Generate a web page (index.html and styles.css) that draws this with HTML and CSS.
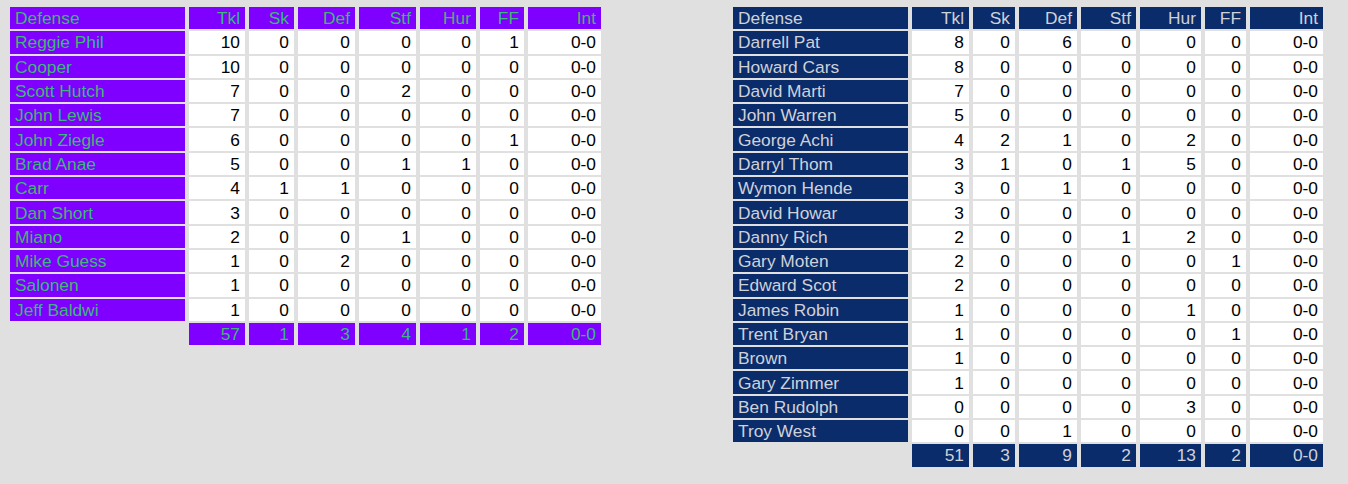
FILE: index.html
```html
<!DOCTYPE html>
<html>
<head>
<meta charset="utf-8">
<title>Defense</title>
<link rel="stylesheet" href="styles.css">
</head>
<body>
<div class="page">
  <table class="stats home">
    <thead>
      <tr><th class="name c1">Defense</th><th class="c2">Tkl</th><th class="c3">Sk</th><th class="c4">Def</th><th class="c5">Stf</th><th class="c6">Hur</th><th class="c7">FF</th><th class="c8">Int</th></tr>
    </thead>
    <tbody>
      <tr><th class="name">Reggie Phil</th><td>10</td><td>0</td><td>0</td><td>0</td><td>0</td><td>1</td><td>0-0</td></tr>
      <tr><th class="name">Cooper</th><td>10</td><td>0</td><td>0</td><td>0</td><td>0</td><td>0</td><td>0-0</td></tr>
      <tr><th class="name">Scott Hutch</th><td>7</td><td>0</td><td>0</td><td>2</td><td>0</td><td>0</td><td>0-0</td></tr>
      <tr><th class="name">John Lewis</th><td>7</td><td>0</td><td>0</td><td>0</td><td>0</td><td>0</td><td>0-0</td></tr>
      <tr><th class="name">John Ziegle</th><td>6</td><td>0</td><td>0</td><td>0</td><td>0</td><td>1</td><td>0-0</td></tr>
      <tr><th class="name">Brad Anae</th><td>5</td><td>0</td><td>0</td><td>1</td><td>1</td><td>0</td><td>0-0</td></tr>
      <tr><th class="name">Carr</th><td>4</td><td>1</td><td>1</td><td>0</td><td>0</td><td>0</td><td>0-0</td></tr>
      <tr><th class="name">Dan Short</th><td>3</td><td>0</td><td>0</td><td>0</td><td>0</td><td>0</td><td>0-0</td></tr>
      <tr><th class="name">Miano</th><td>2</td><td>0</td><td>0</td><td>1</td><td>0</td><td>0</td><td>0-0</td></tr>
      <tr><th class="name">Mike Guess</th><td>1</td><td>0</td><td>2</td><td>0</td><td>0</td><td>0</td><td>0-0</td></tr>
      <tr><th class="name">Salonen</th><td>1</td><td>0</td><td>0</td><td>0</td><td>0</td><td>0</td><td>0-0</td></tr>
      <tr><th class="name">Jeff Baldwi</th><td>1</td><td>0</td><td>0</td><td>0</td><td>0</td><td>0</td><td>0-0</td></tr>
    </tbody>
    <tfoot>
      <tr><td class="blank"></td><th>57</th><th>1</th><th>3</th><th>4</th><th>1</th><th>2</th><th>0-0</th></tr>
    </tfoot>
  </table>

  <table class="stats away">
    <thead>
      <tr><th class="name c1">Defense</th><th class="c2">Tkl</th><th class="c3">Sk</th><th class="c4">Def</th><th class="c5">Stf</th><th class="c6">Hur</th><th class="c7">FF</th><th class="c8">Int</th></tr>
    </thead>
    <tbody>
      <tr><th class="name">Darrell Pat</th><td>8</td><td>0</td><td>6</td><td>0</td><td>0</td><td>0</td><td>0-0</td></tr>
      <tr><th class="name">Howard Cars</th><td>8</td><td>0</td><td>0</td><td>0</td><td>0</td><td>0</td><td>0-0</td></tr>
      <tr><th class="name">David Marti</th><td>7</td><td>0</td><td>0</td><td>0</td><td>0</td><td>0</td><td>0-0</td></tr>
      <tr><th class="name">John Warren</th><td>5</td><td>0</td><td>0</td><td>0</td><td>0</td><td>0</td><td>0-0</td></tr>
      <tr><th class="name">George Achi</th><td>4</td><td>2</td><td>1</td><td>0</td><td>2</td><td>0</td><td>0-0</td></tr>
      <tr><th class="name">Darryl Thom</th><td>3</td><td>1</td><td>0</td><td>1</td><td>5</td><td>0</td><td>0-0</td></tr>
      <tr><th class="name">Wymon Hende</th><td>3</td><td>0</td><td>1</td><td>0</td><td>0</td><td>0</td><td>0-0</td></tr>
      <tr><th class="name">David Howar</th><td>3</td><td>0</td><td>0</td><td>0</td><td>0</td><td>0</td><td>0-0</td></tr>
      <tr><th class="name">Danny Rich</th><td>2</td><td>0</td><td>0</td><td>1</td><td>2</td><td>0</td><td>0-0</td></tr>
      <tr><th class="name">Gary Moten</th><td>2</td><td>0</td><td>0</td><td>0</td><td>0</td><td>1</td><td>0-0</td></tr>
      <tr><th class="name">Edward Scot</th><td>2</td><td>0</td><td>0</td><td>0</td><td>0</td><td>0</td><td>0-0</td></tr>
      <tr><th class="name">James Robin</th><td>1</td><td>0</td><td>0</td><td>0</td><td>1</td><td>0</td><td>0-0</td></tr>
      <tr><th class="name">Trent Bryan</th><td>1</td><td>0</td><td>0</td><td>0</td><td>0</td><td>1</td><td>0-0</td></tr>
      <tr><th class="name">Brown</th><td>1</td><td>0</td><td>0</td><td>0</td><td>0</td><td>0</td><td>0-0</td></tr>
      <tr><th class="name">Gary Zimmer</th><td>1</td><td>0</td><td>0</td><td>0</td><td>0</td><td>0</td><td>0-0</td></tr>
      <tr><th class="name">Ben Rudolph</th><td>0</td><td>0</td><td>0</td><td>0</td><td>3</td><td>0</td><td>0-0</td></tr>
      <tr><th class="name">Troy West</th><td>0</td><td>0</td><td>1</td><td>0</td><td>0</td><td>0</td><td>0-0</td></tr>
    </tbody>
    <tfoot>
      <tr><td class="blank"></td><th>51</th><th>3</th><th>9</th><th>2</th><th>13</th><th>2</th><th>0-0</th></tr>
    </tfoot>
  </table>
</div>
</body>
</html>
```

FILE: styles.css
```css
html, body {
  margin: 0;
  padding: 0;
  background: #e0e0e0;
}

.page {
  display: flex;
  align-items: flex-start;
  gap: 124px;
  padding: 5px 0 0 6px;
}

.stats {
  table-layout: fixed;
  border-collapse: separate;
  border-spacing: 4px 2px;
  font-family: "Liberation Sans", Arial, sans-serif;
  font-size: 17.33px;
  line-height: 20px;
}

.stats th,
.stats td {
  box-sizing: border-box;
  height: 22.3px;
  padding: 0 5px 0 4px;
  font-weight: normal;
  text-align: right;
  white-space: nowrap;
  overflow: hidden;
}

.stats td {
  background: #ffffff;
  color: #000000;
}

.stats th.name {
  text-align: left;
  padding-left: 5px;
}

.stats td.blank {
  background: transparent;
}

/* home team (purple) */
.home { width: 599px; }
.home th { background: #8000ff; color: #3cb878; }
.home .c1 { width: 175px; }
.home .c2 { width: 56px; }
.home .c3 { width: 45px; }
.home .c4 { width: 57px; }
.home .c5 { width: 57px; }
.home .c6 { width: 56px; }
.home .c7 { width: 44px; }
.home .c8 { width: 73px; }

/* away team (navy) */
.away { width: 598px; }
.away th { background: #0b2c6b; color: #cfd2d8; }
.away .c1 { width: 175px; }
.away .c2 { width: 57px; }
.away .c3 { width: 42px; }
.away .c4 { width: 58px; }
.away .c5 { width: 55px; }
.away .c6 { width: 61px; }
.away .c7 { width: 41px; }
.away .c8 { width: 73px; }
```
